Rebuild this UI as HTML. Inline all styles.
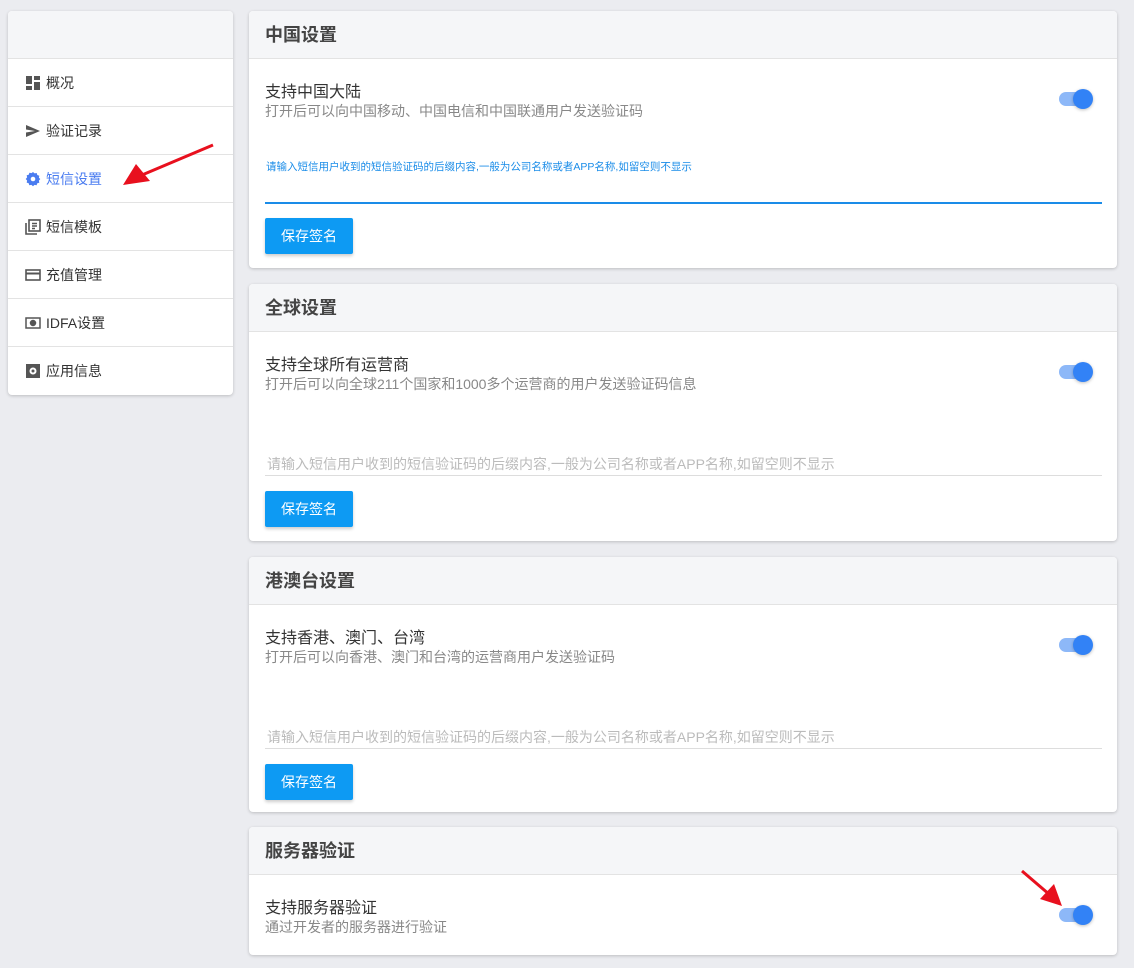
<!DOCTYPE html>
<html><head><meta charset="utf-8"><style>
*{box-sizing:border-box;margin:0;padding:0}
body{width:1134px;height:968px;background:#ebecf0;font-family:"Liberation Sans","Noto Sans CJK SC",sans-serif;position:relative;overflow:hidden;color:#333}
.side{position:absolute;left:8px;top:11px;width:225px;height:384px;background:#fff;border-radius:4px;box-shadow:0 1px 3px rgba(0,0,0,.2)}
.side .hd{height:48px;background:#f5f6f8;border-bottom:1px solid #e3e3e3;border-radius:4px 4px 0 0}
.side .it{height:48px;border-bottom:1px solid #e3e3e3;display:flex;align-items:center;padding-left:17px;font-size:14px;color:#333}
.side .it:last-child{border-bottom:none}
.side .it svg{width:16px;height:16px;margin-right:5px}
.side .it.act{color:#4a7cf0}
.card{position:absolute;left:249px;width:868px;background:#fff;border-radius:4px;box-shadow:0 1px 3px rgba(0,0,0,.2)}
.card .hd{height:48px;background:#f5f6f8;border-bottom:1px solid #e3e3e3;padding-left:16px;font-size:18px;font-weight:bold;color:#444;line-height:48px;border-radius:4px 4px 0 0}
.t1{position:absolute;left:16px;font-size:16px;color:#333}
.t2{position:absolute;left:16px;font-size:14px;color:#888}
.tg{position:absolute;left:810px;width:32px;height:14px;background:#8db8f8;border-radius:7px}
.tg:after{content:"";position:absolute;left:14px;top:-3px;width:20px;height:20px;border-radius:50%;background:#3282f6;box-shadow:0 1px 3px rgba(0,0,0,.25)}
.inp{position:absolute;left:16px;width:837px;border-bottom:1px solid #ddd;font-size:14px;color:#bbb;padding-left:2px}
.btn{position:absolute;left:16px;width:88px;height:36px;background:#0d9af3;color:#fff;font-size:14px;border-radius:2px;text-align:center;line-height:36px;box-shadow:0 2px 3px rgba(0,0,0,.2)}
</style></head><body>
<div class="side">
<div class="hd"></div>
<div class="it"><svg viewBox="0 0 16 16" fill="#555"><rect x="1" y="1" width="6" height="8"/><rect x="9" y="1" width="6" height="4"/><rect x="1" y="11" width="6" height="4"/><rect x="9" y="7" width="6" height="8"/></svg>概况</div>
<div class="it"><svg viewBox="0 0 16 16" fill="#555"><path d="M1 2L15 8L1 14L1 9.5L10 8L1 6.5Z"/></svg>验证记录</div>
<div class="it act"><svg viewBox="0 0 16 16" fill="#4a7cf0"><path d="M8 1l1.6 1.4 2.1-.4.6 2 2 .7-.4 2.1L15.3 8l-1.4 1.6.4 2.1-2 .6-.7 2-2.1-.4L8 15.3 6.4 13.9l-2.1.4-.6-2-2-.7.4-2.1L.7 8l1.4-1.6-.4-2.1 2-.6.7-2 2.1.4Z"/><circle cx="8" cy="8" r="2.3" fill="#fff"/></svg>短信设置</div>
<div class="it"><svg viewBox="0 0 16 16" fill="none" stroke="#555" stroke-width="1.6"><path d="M1 4v11h11"/><rect x="4" y="1" width="11" height="11"/><path d="M7 4.5h5M7 7h5M7 9.5h3"/></svg>短信模板</div>
<div class="it"><svg viewBox="0 0 16 16" fill="none" stroke="#555" stroke-width="1.6"><rect x="1" y="3" width="14" height="10"/><path d="M1 6.5h14" stroke-width="2"/></svg>充值管理</div>
<div class="it"><svg viewBox="0 0 16 16" fill="none" stroke="#555" stroke-width="1.5"><rect x="1" y="3" width="14" height="10"/><circle cx="8" cy="8" r="2.5" fill="#555"/></svg>IDFA设置</div>
<div class="it"><svg viewBox="0 0 16 16"><rect x="1" y="1" width="14" height="14" fill="#555"/><circle cx="8" cy="8" r="3.5" fill="#fff"/><circle cx="8" cy="8" r="1.5" fill="#555"/></svg>应用信息</div>
</div>

<div class="card" style="top:11px;height:257px">
<div class="hd">中国设置</div>
<div class="t1" style="top:67px">支持中国大陆</div>
<div class="t2" style="top:90px">打开后可以向中国移动、中国电信和中国联通用户发送验证码</div>
<div class="tg" style="top:81px"></div>
<div style="position:absolute;left:17px;top:148px;font-size:10.5px;color:#1a8ce8">请输入短信用户收到的短信验证码的后缀内容,一般为公司名称或者APP名称,如留空则不显示</div>
<div style="position:absolute;left:16px;top:191px;width:837px;height:2px;background:#1a8ce8"></div>
<div class="btn" style="top:207px">保存签名</div>
</div>

<div class="card" style="top:284px;height:257px">
<div class="hd">全球设置</div>
<div class="t1" style="top:67px">支持全球所有运营商</div>
<div class="t2" style="top:90px">打开后可以向全球211个国家和1000多个运营商的用户发送验证码信息</div>
<div class="tg" style="top:81px"></div>
<div class="inp" style="top:170px;height:22px">请输入短信用户收到的短信验证码的后缀内容,一般为公司名称或者APP名称,如留空则不显示</div>
<div class="btn" style="top:207px">保存签名</div>
</div>

<div class="card" style="top:557px;height:255px">
<div class="hd">港澳台设置</div>
<div class="t1" style="top:67px">支持香港、澳门、台湾</div>
<div class="t2" style="top:90px">打开后可以向香港、澳门和台湾的运营商用户发送验证码</div>
<div class="tg" style="top:81px"></div>
<div class="inp" style="top:170px;height:22px">请输入短信用户收到的短信验证码的后缀内容,一般为公司名称或者APP名称,如留空则不显示</div>
<div class="btn" style="top:207px">保存签名</div>
</div>

<div class="card" style="top:827px;height:128px">
<div class="hd">服务器验证</div>
<div class="t1" style="top:67px">支持服务器验证</div>
<div class="t2" style="top:90px">通过开发者的服务器进行验证</div>
<div class="tg" style="top:81px"></div>
</div>

<svg style="position:absolute;left:0;top:0" width="1134" height="968">
<path d="M213 145L142 175" stroke="#e8101e" stroke-width="3"/>
<path d="M123 185L136 164L150 181Z" fill="#e8101e"/>
<path d="M1022 871L1050 895" stroke="#e8101e" stroke-width="3"/>
<path d="M1062 906L1040 899L1054 884Z" fill="#e8101e"/>
</svg>
</body></html>
